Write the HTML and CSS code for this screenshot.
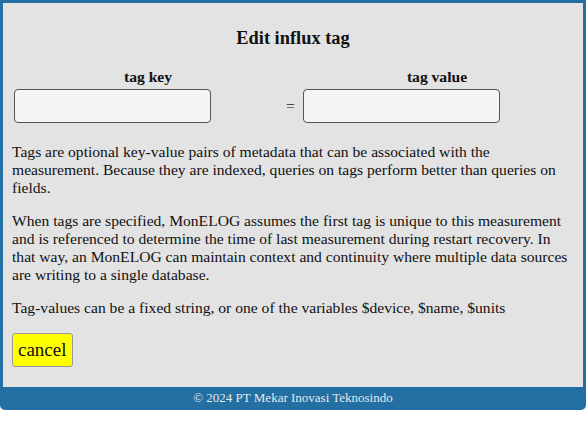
FILE: index.html
```html
<!DOCTYPE html>
<html>
<head>
<meta charset="utf-8">
<link rel="stylesheet" href="styles.css">
</head>
<body>
<div class="frame">
  <div class="panel">
    <h3 class="title">Edit influx tag</h3>
    <div class="tag-form">
      <div class="label">tag key</div>
      <div></div>
      <div class="label">tag value</div>
      <input class="field" type="text">
      <div class="eq">=</div>
      <input class="field" type="text">
    </div>
    <p class="text">Tags are optional key-value pairs of metadata that can be associated with the measurement. Because they are indexed, queries on tags perform better than queries on fields.</p>
    <p class="text">When tags are specified, MonELOG assumes the first tag is unique to this measurement and is referenced to determine the time of last measurement during restart recovery. In that way, an MonELOG can maintain context and continuity where multiple data sources are writing to a single database.</p>
    <p class="text">Tag-values can be a fixed string, or one of the variables $device, $name, $units</p>
    <button class="cancel">cancel</button>
  </div>
  <div class="footer">© 2024 PT Mekar Inovasi Teknosindo</div>
</div>
</body>
</html>
```
FILE: styles.css
```css
html, body {
  margin: 0;
  padding: 0;
  background: #ffffff;
}
body {
  font-family: "Times New Roman", "Liberation Serif", serif;
  font-size: 15.6px;
  color: #111;
}
.frame {
  width: 580px;
  background: #236fa1;
  padding: 3px 3px 0 3px;
  border-radius: 0 0 5px 5px;
}
.panel {
  background: #e3e3e3;
  padding: 1px 9px 20px 9px;
}
.title {
  text-align: center;
  font-size: 18.4px;
  font-weight: bold;
  margin: 24px 0 19px 0;
}
.tag-form {
  display: grid;
  grid-template-columns: 272px 17px 272px;
  align-items: center;
}
.label {
  text-align: center;
  font-weight: bold;
  line-height: 18px;
  margin-bottom: 3px;
}
.field {
  justify-self: start;
  margin-left: 2px;
  width: 197px;
  height: 34px;
  box-sizing: border-box;
  background: #f5f5f5;
  border: 1.5px solid #555;
  border-radius: 4px;
}
.eq {
  text-align: left;
  padding-left: 2px;
  color: #222;
}
.text {
  margin: 15px 0 0 0;
  line-height: 18px;
}
.tag-form + .text {
  margin-top: 20px;
}
.cancel {
  margin-top: 16px;
  font-family: "Times New Roman", "Liberation Serif", serif;
  font-size: 19px;
  background: #ffff00;
  border: 1px solid #999;
  border-radius: 3px;
  height: 34px;
  padding: 0 5px;
  color: #111;
}
.footer {
  height: 23px;
  line-height: 22px;
  text-align: center;
  color: #e2e8ee;
  font-size: 13px;
}
```
